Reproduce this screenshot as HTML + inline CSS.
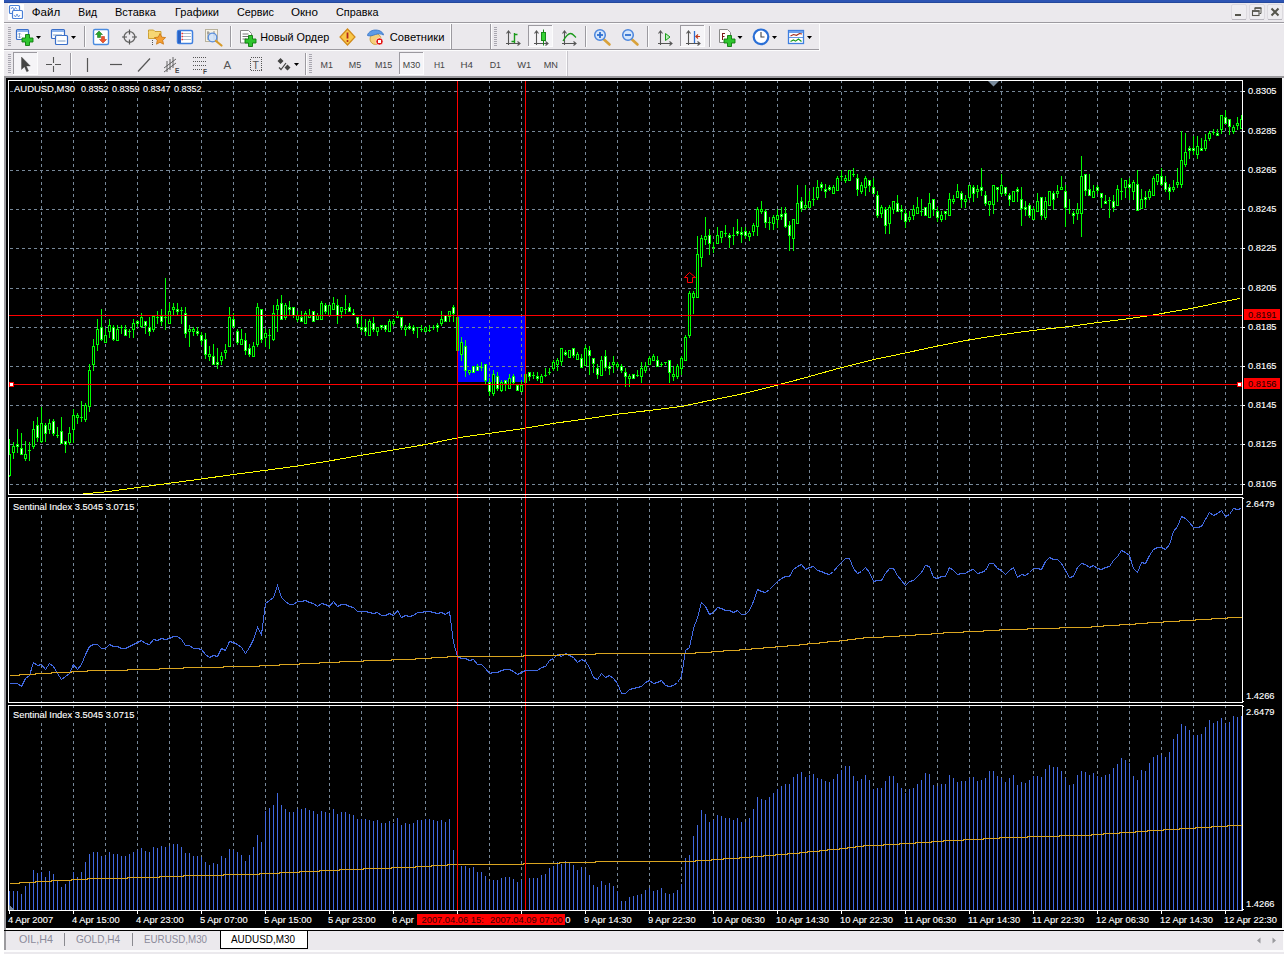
<!DOCTYPE html>
<html><head><meta charset="utf-8"><title>AUDUSD,M30</title>
<style>html,body{margin:0;padding:0;background:#fff;overflow:hidden}svg text{white-space:pre}</style>
</head><body>
<svg width="1288" height="954" viewBox="0 0 1288 954" font-family="'Liberation Sans',sans-serif" style="display:block">
<rect x="0" y="0" width="1288" height="954" fill="#fff"/>
<rect x="4" y="0" width="1280" height="954" fill="#ebe9ed"/>
<rect x="4" y="0" width="1280" height="3" fill="#2d55b4"/>
<rect x="4" y="2" width="1280" height="1" fill="#24489c"/>
<rect x="4" y="22" width="1280" height="1" fill="#9c9aa0"/>
<rect x="4" y="23" width="1280" height="1" fill="#fbfbfc"/>
<g id="chrome">
<g shape-rendering="crispEdges">
<rect x="4" y="49" width="816" height="1" fill="#9c9aa0"/>
<rect x="4" y="50" width="816" height="1" fill="#fcfcfd"/>
<rect x="450" y="24" width="1" height="25" fill="#fcfcfd"/>
<rect x="451" y="24" width="1" height="25" fill="#9c9aa0"/>
<rect x="490" y="24" width="1" height="25" fill="#9c9aa0"/>
<rect x="491" y="24" width="1" height="25" fill="#fcfcfd"/>
<rect x="819" y="24" width="1" height="26" fill="#fcfcfd"/>
<rect x="566" y="51" width="1" height="25" fill="#fcfcfd"/>
<rect x="567" y="51" width="1" height="25" fill="#c8c6cc"/>
<path d="M8 27h3v1h-3zM8 29h3v1h-3zM8 31h3v1h-3zM8 33h3v1h-3zM8 35h3v1h-3zM8 37h3v1h-3zM8 39h3v1h-3zM8 41h3v1h-3zM8 43h3v1h-3zM8 45h3v1h-3z" fill="#a9a7b0"/>
<path d="M494 27h3v1h-3zM494 29h3v1h-3zM494 31h3v1h-3zM494 33h3v1h-3zM494 35h3v1h-3zM494 37h3v1h-3zM494 39h3v1h-3zM494 41h3v1h-3zM494 43h3v1h-3zM494 45h3v1h-3z" fill="#a9a7b0"/>
<path d="M8 54h3v1h-3zM8 56h3v1h-3zM8 58h3v1h-3zM8 60h3v1h-3zM8 62h3v1h-3zM8 64h3v1h-3zM8 66h3v1h-3zM8 68h3v1h-3zM8 70h3v1h-3zM8 72h3v1h-3z" fill="#a9a7b0"/>
<path d="M309 54h3v1h-3zM309 56h3v1h-3zM309 58h3v1h-3zM309 60h3v1h-3zM309 62h3v1h-3zM309 64h3v1h-3zM309 66h3v1h-3zM309 68h3v1h-3zM309 70h3v1h-3zM309 72h3v1h-3z" fill="#a9a7b0"/>
<rect x="84" y="26" width="1" height="21" fill="#9c9aa0"/><rect x="85" y="26" width="1" height="21" fill="#fcfcfd"/>
<rect x="230" y="26" width="1" height="21" fill="#9c9aa0"/><rect x="231" y="26" width="1" height="21" fill="#fcfcfd"/>
<rect x="585" y="26" width="1" height="21" fill="#9c9aa0"/><rect x="586" y="26" width="1" height="21" fill="#fcfcfd"/>
<rect x="647" y="26" width="1" height="21" fill="#9c9aa0"/><rect x="648" y="26" width="1" height="21" fill="#fcfcfd"/>
<rect x="709" y="26" width="1" height="21" fill="#9c9aa0"/><rect x="710" y="26" width="1" height="21" fill="#fcfcfd"/>
<rect x="70" y="53" width="1" height="22" fill="#9c9aa0"/><rect x="71" y="53" width="1" height="22" fill="#fcfcfd"/>
<rect x="305" y="53" width="1" height="22" fill="#9c9aa0"/><rect x="306" y="53" width="1" height="22" fill="#fcfcfd"/>
<rect x="528" y="25" width="25" height="22" fill="#f5f4f7"/><rect x="528" y="25" width="25" height="1" fill="#9c9aa0"/><rect x="528" y="25" width="1" height="22" fill="#9c9aa0"/><rect x="528" y="46" width="25" height="1" fill="#fcfcfd"/><rect x="552" y="25" width="1" height="22" fill="#fcfcfd"/>
<rect x="680" y="25" width="25" height="22" fill="#f5f4f7"/><rect x="680" y="25" width="25" height="1" fill="#9c9aa0"/><rect x="680" y="25" width="1" height="22" fill="#9c9aa0"/><rect x="680" y="46" width="25" height="1" fill="#fcfcfd"/><rect x="704" y="25" width="1" height="22" fill="#fcfcfd"/>
<rect x="13" y="52" width="25" height="23" fill="#f5f4f7"/><rect x="13" y="52" width="25" height="1" fill="#9c9aa0"/><rect x="13" y="52" width="1" height="23" fill="#9c9aa0"/><rect x="13" y="74" width="25" height="1" fill="#fcfcfd"/><rect x="37" y="52" width="1" height="23" fill="#fcfcfd"/>
<rect x="399" y="52" width="25" height="23" fill="#f5f4f7"/><rect x="399" y="52" width="25" height="1" fill="#9c9aa0"/><rect x="399" y="52" width="1" height="23" fill="#9c9aa0"/><rect x="399" y="74" width="25" height="1" fill="#fcfcfd"/><rect x="423" y="52" width="1" height="23" fill="#fcfcfd"/>
<path d="M36 36h5l-2.5 3z" fill="#000" shape-rendering="auto"/>
<path d="M71 36h5l-2.5 3z" fill="#000" shape-rendering="auto"/>
<path d="M737.5 36h5l-2.5 3z" fill="#000" shape-rendering="auto"/>
<path d="M772 36h5l-2.5 3z" fill="#000" shape-rendering="auto"/>
<path d="M807 36h5l-2.5 3z" fill="#000" shape-rendering="auto"/>
<path d="M294 63h5l-2.5 3z" fill="#000" shape-rendering="auto"/>
</g>
<g font-size="11.5" fill="#000">
<rect x="8" y="4" width="16" height="16" fill="#fff"/>
<g fill="#fff" stroke="#4a7fd6" stroke-width="1.2"><rect x="9.5" y="5.5" width="10" height="8" rx="1"/><rect x="12.5" y="10.5" width="10" height="8" rx="1"/></g>
<path d="M11 9l1.5-2 1.5 3 1.5-2.5 1.5 2M14 15l1.5 2 1.5-3 1.5 3 1.5-2" fill="none" stroke="#4a7fd6" stroke-width="0.8"/>
<text x="31.7" y="16" textLength="28.5" lengthAdjust="spacingAndGlyphs">Файл</text>
<text x="78.3" y="16" textLength="18.6" lengthAdjust="spacingAndGlyphs">Вид</text>
<text x="114.9" y="16" textLength="41" lengthAdjust="spacingAndGlyphs">Вставка</text>
<text x="175" y="16" textLength="44" lengthAdjust="spacingAndGlyphs">Графики</text>
<text x="237" y="16" textLength="37" lengthAdjust="spacingAndGlyphs">Сервис</text>
<text x="291" y="16" textLength="27" lengthAdjust="spacingAndGlyphs">Окно</text>
<text x="336" y="16" textLength="42.5" lengthAdjust="spacingAndGlyphs">Справка</text>
</g>
<rect x="1231.5" y="4.5" width="15" height="15" rx="1.5" fill="#eeedf0" stroke="#dcdadf"/>
<rect x="1232" y="19" width="14" height="1" fill="#b9b7be"/>
<rect x="1249.5" y="4.5" width="15" height="15" rx="1.5" fill="#eeedf0" stroke="#dcdadf"/>
<rect x="1250" y="19" width="14" height="1" fill="#b9b7be"/>
<rect x="1267.5" y="4.5" width="15" height="15" rx="1.5" fill="#eeedf0" stroke="#dcdadf"/>
<rect x="1268" y="19" width="14" height="1" fill="#b9b7be"/>
<rect x="1235" y="14" width="6" height="2" fill="#55554c"/>
<path d="M1255 10v-2h6v5.500h-1.500" fill="none" stroke="#55554c" stroke-width="1"/>
<rect x="1254.5" y="7.3" width="7" height="1.5" fill="#55554c"/>
<rect x="1252.500" y="11" width="6.500" height="4.500" fill="none" stroke="#55554c" stroke-width="1.100"/>
<rect x="1252" y="10.2" width="7.5" height="1.6" fill="#55554c"/>
<path d="M1271.5 8.5l7 7M1278.5 8.5l-7 7" stroke="#55554c" stroke-width="2" fill="none"/>
<rect x="16.5" y="29.5" width="12" height="10" rx="1" fill="#fff" stroke="#3a6fc9" stroke-width="1.2"/>
<rect x="17" y="30" width="11" height="2" fill="#8db4ee"/>
<path d="M19.5 33v5M18 34.5l1.5-1.5 1.5 1.5M18 36.5l1.5 1.5 1.5-1.5" stroke="#6a8fc0" stroke-width="0.8" fill="none"/>
<path d="M25.5 34.5h4v3.5h3.5v4h-3.5v3.5h-4v-3.5h-3.5v-4h3.5z" fill="#2fc52f" stroke="#0d7a0d" stroke-width="0.9"/>
<rect x="51.5" y="29.5" width="13" height="9" rx="1" fill="#fff" stroke="#3a6fc9" stroke-width="1.2"/>
<rect x="52" y="30" width="12" height="2" fill="#8db4ee"/>
<rect x="55.5" y="35.5" width="12" height="9" rx="1" fill="#fff" stroke="#3a6fc9" stroke-width="1.2"/>
<path d="M53 35h9M57.5 41h8" stroke="#6a8fc0" stroke-width="0.9" fill="none"/>
<rect x="93.5" y="29.5" width="15" height="15" rx="1.5" fill="#fff" stroke="#4a8be0" stroke-width="1.4"/>
<path d="M99 31l-3.5 3.5h2v3h3v-3h2z" fill="#2aa52a" stroke="#116b11" stroke-width="0.5"/>
<path d="M103 43l-3.5-3.5h2v-3h3v3h2z" fill="#f0552a" stroke="#b02a10" stroke-width="0.5"/>
<circle cx="129.5" cy="37" r="5.4" fill="none" stroke="#666" stroke-width="1.3"/>
<path d="M129.5 29.5v5M129.5 39.5v5M122 37h5M132 37h5" stroke="#555" stroke-width="1.2" fill="none"/>
<path d="M148.5 32.5v-2.5h5l1.5 1.5h6v7h-12.5z" fill="#f7d774" stroke="#c79a28" stroke-width="0.9"/>
<path d="M160 33.5l1.7 3.6 3.9.5-2.9 2.7.8 3.9-3.5-1.9-3.5 1.9.8-3.9-2.9-2.7 3.9-.5z" fill="#f5a033" stroke="#c97412" stroke-width="0.8"/>
<path d="M152.5 40v5" stroke="#555" stroke-width="1" stroke-dasharray="1 1"/>
<rect x="177.5" y="30.5" width="15" height="13" rx="1.5" fill="#fff" stroke="#3f7fe0" stroke-width="1.5"/>
<rect x="178" y="31" width="3" height="12" fill="#2a62c4"/>
<path d="M183 33.5h8M183 36.5h8M183 39.5h8" stroke="#9ab" stroke-width="0.8"/>
<path d="M181.5 33.5h1.4M181.5 36.5h1.4M181.5 39.5h1.4" stroke="#e22" stroke-width="1.3"/>
<rect x="205.5" y="29.5" width="12" height="12" fill="#f6f2e6" stroke="#b9b29c" stroke-width="1"/>
<path d="M208 31v9M214 31v9M207 33h3M213 35h3" stroke="#777" stroke-width="0.8"/>
<circle cx="212.5" cy="37.5" r="4.3" fill="#cfe3fb" fill-opacity="0.85" stroke="#5b8fdc" stroke-width="1.3"/>
<path d="M216 41l5.5 4.5" stroke="#d79a2a" stroke-width="2.2" stroke-linecap="round"/>
<path d="M240.5 30.5h8l3 3v9.5h-11z" fill="#fff" stroke="#8a8a8a" stroke-width="1"/>
<path d="M242.5 34h6M242.5 36.5h7M242.5 39h4" stroke="#666" stroke-width="0.9"/>
<path d="M248.5 35.5h4v3.5h3.5v4h-3.5v3.5h-4v-3.5h-3.5v-4h3.5z" fill="#2fc52f" stroke="#0d7a0d" stroke-width="0.9"/>
<text x="260.2" y="41" font-size="11" textLength="69" lengthAdjust="spacingAndGlyphs" fill="#000">Новый Ордер</text>
<path d="M347.5 29l7.5 8-7.5 8-7.5-8z" fill="#f9c84a" stroke="#d18a1a" stroke-width="1.2"/>
<path d="M347.5 32.5v6" stroke="#b3261a" stroke-width="1.8"/><circle cx="347.5" cy="41" r="1" fill="#b3261a"/>
<ellipse cx="375.5" cy="39" rx="5.5" ry="5.5" fill="#f6cf7a" stroke="#c9962c" stroke-width="0.8"/>
<path d="M367.5 35.5c0-2 3-5.5 8-5.5s8 3 8 5c-3-1.5-5-1.5-8-.5s-5.500 2-8 1z" fill="#5f9be6" stroke="#2f6fc4" stroke-width="0.8"/>
<circle cx="379.5" cy="41.5" r="3.6" fill="#e01616" stroke="#fff" stroke-width="0.6"/>
<rect x="378" y="40" width="3" height="3" fill="#fff"/>
<text x="389.8" y="41" font-size="11" textLength="54.6" lengthAdjust="spacingAndGlyphs" fill="#000">Советники</text>
<path d="M508.5 31v14M506 43.5h14M506.5 33.5l2-2.5 2 2.5M517.5 41.5l2.500 2-2.500 2" stroke="#555" stroke-width="1.1" fill="none"/>
<path d="M514.5 33v10M514.5 34.500h3M511.500 41.500h3" stroke="#1a9a1a" stroke-width="1.4" fill="none"/>
<path d="M536.5 31v14M534 43.5h14M534.5 33.5l2-2.5 2 2.5M545.5 41.5l2.500 2-2.500 2" stroke="#555" stroke-width="1.1" fill="none"/>
<path d="M543.5 29.5v16" stroke="#1a8a1a" stroke-width="1"/>
<rect x="541.5" y="32.5" width="4" height="8" fill="#35d335" stroke="#1a8a1a" stroke-width="1"/>
<path d="M564.5 31v14M562 43.5h14M562.5 33.5l2-2.5 2 2.5M573.5 41.5l2.500 2-2.500 2" stroke="#555" stroke-width="1.1" fill="none"/>
<path d="M563 41c3-5 5-7.500 7.500-7.500s3.500 2.500 5.500 4" stroke="#1a9a1a" stroke-width="1.3" fill="none"/>
<path d="M604 39.5l5.500 5" stroke="#d8a13a" stroke-width="2.600" stroke-linecap="round"/><circle cx="600" cy="35" r="5.300" fill="#d5e6fb" stroke="#4c86dd" stroke-width="1.500"/><path d="M597 35h6" stroke="#2f6fd0" stroke-width="1.800"/><path d="M600 32v6" stroke="#2f6fd0" stroke-width="1.800"/>
<path d="M632 39.5l5.500 5" stroke="#d8a13a" stroke-width="2.600" stroke-linecap="round"/><circle cx="628" cy="35" r="5.300" fill="#d5e6fb" stroke="#4c86dd" stroke-width="1.500"/><path d="M625 35h6" stroke="#2f6fd0" stroke-width="1.800"/>
<path d="M660.5 31v14M658 43.5h14M658.5 33.5l2-2.5 2 2.5M669.5 41.5l2.500 2-2.500 2" stroke="#555" stroke-width="1.1" fill="none"/>
<path d="M665.500 33.500l4.500 3.500-4.500 3.500z" fill="#baf0ba" stroke="#1a9a1a" stroke-width="1"/>
<path d="M688.5 31v14M686 43.5h14M686.5 33.5l2-2.5 2 2.5M697.5 41.5l2.500 2-2.500 2" stroke="#555" stroke-width="1.1" fill="none"/>
<path d="M694.500 31v12" stroke="#2f6fd0" stroke-width="1.300"/><path d="M700 36.500h-4M698 34.500l-2.200 2 2.200 2" stroke="#c0391a" stroke-width="1.100" fill="none"/>
<path d="M719.500 29.500h8l3 3v10h-11z" fill="#fff" stroke="#8a8a8a" stroke-width="1"/>
<path d="M722.500 33v7M722.500 33.500h2.500M722.500 36.500h2" stroke="#7a1a1a" stroke-width="1"/>
<path d="M727.5 35.5h4v3.5h3.5v4h-3.5v3.5h-4v-3.5h-3.5v-4h3.5z" fill="#2fc52f" stroke="#0d7a0d" stroke-width="0.9"/>
<circle cx="761" cy="36.800" r="7.300" fill="#fff" stroke="#2a6fd6" stroke-width="2.200"/>
<path d="M761 32v5h3.500" stroke="#444" stroke-width="1.100" fill="none"/>
<rect x="788.500" y="30.500" width="15" height="13" fill="#fff" stroke="#3f7fe0" stroke-width="1.300"/>
<rect x="789" y="31" width="14" height="2" fill="#6da0ea"/>
<path d="M789 37.500h14" stroke="#3f7fe0" stroke-width="0.800"/>
<path d="M790.500 36l3-1.500 3 .8 3-1.800 2.500.5" stroke="#a02a1a" stroke-width="1.100" fill="none"/>
<path d="M790.500 41.500l3-1.500 2 1.200 3-2.200 3 2.500" stroke="#1a9a1a" stroke-width="1.100" fill="none"/>
<path d="M21.500 57v12.500l3-2.800 2.200 5 1.800-.8-2.200-4.900h4z" fill="#444" stroke="#444" stroke-width="0.400"/>
<path d="M53.500 57v6M53.500 66v6M46 64.500h6M55 64.500h6" stroke="#555" stroke-width="1.100"/>
<path d="M87.500 58v14" stroke="#555" stroke-width="1.200"/>
<path d="M110 64.500h12" stroke="#555" stroke-width="1.200"/>
<path d="M138 71.500l12-13" stroke="#555" stroke-width="1.200"/>
<path d="M164 68l12-9M164 72l12-9M167 61v11M170 59v11M173 57v11" stroke="#555" stroke-width="0.900" fill="none"/>
<text x="175" y="73" font-size="6.500" font-weight="bold" fill="#444">E</text>
<path d="M193 57.500h14M193 61.500h14M193 65.500h14M193 69.500h9" stroke="#555" stroke-width="1" stroke-dasharray="1 1" shape-rendering="crispEdges"/>
<text x="203" y="73.500" font-size="6.500" font-weight="bold" fill="#444">F</text>
<text x="223.500" y="69" font-size="11.500" fill="#555">A</text>
<rect x="250.500" y="57.500" width="11" height="13" fill="none" stroke="#555" stroke-width="1" stroke-dasharray="1 1" shape-rendering="crispEdges"/>
<text x="252.500" y="68.500" font-size="10.500" fill="#555">T</text>
<path d="M280.500 58l3 3-3 3-3-3z M287.500 64.500l3 3-3 3-3-3z" fill="#444"/><path d="M279 67.500l2 2 5-6.500" stroke="#444" stroke-width="1.200" fill="none"/>
<text x="320.6" y="68" font-size="9.330" fill="#444" textLength="12.4" lengthAdjust="spacingAndGlyphs">M1</text>
<text x="348.8" y="68" font-size="9.330" fill="#444" textLength="12.4" lengthAdjust="spacingAndGlyphs">M5</text>
<text x="374.9" y="68" font-size="9.330" fill="#444" textLength="17.4" lengthAdjust="spacingAndGlyphs">M15</text>
<text x="402.8" y="68" font-size="9.330" fill="#444" textLength="17.4" lengthAdjust="spacingAndGlyphs">M30</text>
<text x="433.9" y="68" font-size="9.330" fill="#444" textLength="10.9" lengthAdjust="spacingAndGlyphs">H1</text>
<text x="460.5" y="68" font-size="9.330" fill="#444" textLength="12.5" lengthAdjust="spacingAndGlyphs">H4</text>
<text x="489.7" y="68" font-size="9.330" fill="#444" textLength="11.3" lengthAdjust="spacingAndGlyphs">D1</text>
<text x="517.3" y="68" font-size="9.330" fill="#444" textLength="14" lengthAdjust="spacingAndGlyphs">W1</text>
<text x="543.7" y="68" font-size="9.330" fill="#444" textLength="14.3" lengthAdjust="spacingAndGlyphs">MN</text>
</g>
<g shape-rendering="crispEdges">
<rect x="4" y="76" width="1280" height="2" fill="#9b9a9e"/>
<rect x="4" y="76" width="2" height="874" fill="#9b9a9e"/>
<rect x="1282" y="78" width="2" height="852" fill="#f8f8fa"/>
<rect x="6" y="78" width="1276" height="850" fill="#000"/>
<rect x="6" y="928" width="1278" height="2" fill="#fdfdfd"/>
<rect x="4" y="930" width="1280" height="1" fill="#000"/>
<rect x="4" y="950" width="1280" height="2" fill="#fcfcfd"/>
<rect x="458" y="316" width="67" height="66" fill="#0000ff"/>
<path d="M41.5 80V494M73.5 80V494M105.5 80V494M137.5 80V494M169.5 80V494M201.5 80V494M233.5 80V494M265.5 80V494M297.5 80V494M329.5 80V494M361.5 80V494M393.5 80V494M425.5 80V494M457.5 80V494M489.5 80V494M521.5 80V494M553.5 80V494M585.5 80V494M617.5 80V494M649.5 80V494M681.5 80V494M713.5 80V494M745.5 80V494M777.5 80V494M809.5 80V494M841.5 80V494M873.5 80V494M905.5 80V494M937.5 80V494M969.5 80V494M1001.5 80V494M1033.5 80V494M1065.5 80V494M1097.5 80V494M1129.5 80V494M1161.5 80V494M1193.5 80V494M1225.5 80V494M41.5 497V702M73.5 497V702M105.5 497V702M137.5 497V702M169.5 497V702M201.5 497V702M233.5 497V702M265.5 497V702M297.5 497V702M329.5 497V702M361.5 497V702M393.5 497V702M425.5 497V702M457.5 497V702M489.5 497V702M521.5 497V702M553.5 497V702M585.5 497V702M617.5 497V702M649.5 497V702M681.5 497V702M713.5 497V702M745.5 497V702M777.5 497V702M809.5 497V702M841.5 497V702M873.5 497V702M905.5 497V702M937.5 497V702M969.5 497V702M1001.5 497V702M1033.5 497V702M1065.5 497V702M1097.5 497V702M1129.5 497V702M1161.5 497V702M1193.5 497V702M1225.5 497V702M41.5 705V910M73.5 705V910M105.5 705V910M137.5 705V910M169.5 705V910M201.5 705V910M233.5 705V910M265.5 705V910M297.5 705V910M329.5 705V910M361.5 705V910M393.5 705V910M425.5 705V910M457.5 705V910M489.5 705V910M521.5 705V910M553.5 705V910M585.5 705V910M617.5 705V910M649.5 705V910M681.5 705V910M713.5 705V910M745.5 705V910M777.5 705V910M809.5 705V910M841.5 705V910M873.5 705V910M905.5 705V910M937.5 705V910M969.5 705V910M1001.5 705V910M1033.5 705V910M1065.5 705V910M1097.5 705V910M1129.5 705V910M1161.5 705V910M1193.5 705V910M1225.5 705V910" stroke="#778899" stroke-width="1" stroke-dasharray="3 3" fill="none"/>
<path d="M10 91.5H1242M10 131.5H1242M10 170.5H1242M10 209.5H1242M10 248.5H1242M10 288.5H1242M10 327.5H1242M10 366.5H1242M10 405.5H1242M10 444.5H1242M10 484.5H1242" stroke="#778899" stroke-width="1" stroke-dasharray="3 3" fill="none"/>
<polyline points="83.2,493.9 105.5,491.9 137.8,487.5 169.6,483.2 201.2,479.0 233.5,474.5 265.8,470.3 297.6,466.0 329.6,460.9 361.4,455.2 392.0,450.2 425.5,444.5 457.8,437.8 489.6,433.3 521.2,428.8 553.5,423.4 585.8,418.9 617.6,414.2 649.6,410.4 681.4,406.5 712.0,400.0 745.5,393.2 777.8,385.0 809.6,376.5 841.2,367.6 873.5,359.6 905.8,352.9 937.6,346.0 969.6,339.8 1001.4,334.8 1033.0,330.4 1065.5,327.0 1097.7,322.5 1129.7,318.5 1148.7,315.8 1161.7,313.5 1193.4,308.0 1225.8,301.2 1240.4,298.3" fill="none" stroke="#ffff00" stroke-width="1"/>
<path d="M9 439h1v38h-1zM8 454h3v22h-3zM13 442h1v17h-1zM12 446h3v7h-3zM17 429h1v24h-1zM16 444h3v3h-3zM21 433h1v22h-1zM20 448h3v7h-3zM25 441h1v20h-1zM24 454h3v5h-3zM29 442h1v19h-1zM28 450h3v1h-3zM33 421h1v28h-1zM32 429h3v18h-3zM37 417h1v25h-1zM36 425h3v13h-3zM41 407h1v36h-1zM40 423h3v19h-3zM45 423h1v19h-1zM44 425h3v9h-3zM49 419h1v15h-1zM48 423h3v7h-3zM53 419h1v17h-1zM52 421h3v13h-3zM57 427h1v11h-1zM56 435h3v1h-3zM61 417h1v27h-1zM60 431h3v13h-3zM65 441h1v12h-1zM64 441h3v4h-3zM69 427h1v18h-1zM68 433h3v10h-3zM73 409h1v34h-1zM72 415h3v15h-3zM77 413h1v11h-1zM76 415h3v3h-3zM81 401h1v21h-1zM80 417h3v1h-3zM85 403h1v19h-1zM84 405h3v15h-3zM89 364h1v48h-1zM88 370h3v37h-3zM93 339h1v32h-1zM92 346h3v19h-3zM97 319h1v32h-1zM96 329h3v16h-3zM101 309h1v32h-1zM100 327h3v13h-3zM105 329h1v14h-1zM104 335h3v8h-3zM109 319h1v19h-1zM108 325h3v7h-3zM113 325h1v16h-1zM112 327h3v13h-3zM117 325h1v16h-1zM116 329h3v12h-3zM121 325h1v9h-1zM120 327h3v1h-3zM125 325h1v11h-1zM124 329h3v7h-3zM129 329h1v9h-1zM128 331h3v1h-3zM133 319h1v19h-1zM132 323h3v7h-3zM137 320h1v7h-1zM136 321h3v3h-3zM141 313h1v15h-1zM140 317h3v10h-3zM145 321h1v13h-1zM144 321h3v5h-3zM149 317h1v19h-1zM148 327h3v5h-3zM153 316h1v16h-1zM152 316h3v14h-3zM157 311h1v13h-1zM156 317h3v1h-3zM161 309h1v17h-1zM160 316h3v6h-3zM165 278h1v52h-1zM164 317h3v1h-3zM169 303h1v21h-1zM168 311h3v13h-3zM173 303h1v12h-1zM172 307h3v3h-3zM177 303h1v12h-1zM176 309h3v3h-3zM181 307h1v17h-1zM180 310h3v1h-3zM185 307h1v31h-1zM184 313h3v21h-3zM189 325h1v22h-1zM188 329h3v3h-3zM193 327h1v9h-1zM192 329h3v3h-3zM197 327h1v9h-1zM196 331h3v3h-3zM201 332h1v13h-1zM200 335h3v6h-3zM205 333h1v26h-1zM204 339h3v16h-3zM209 346h1v15h-1zM208 354h3v3h-3zM213 344h1v21h-1zM212 356h3v9h-3zM217 348h1v21h-1zM216 362h3v3h-3zM221 352h1v13h-1zM220 356h3v5h-3zM225 344h1v15h-1zM224 350h3v3h-3zM229 307h1v40h-1zM228 317h3v30h-3zM233 313h1v15h-1zM232 319h3v8h-3zM237 329h1v16h-1zM236 331h3v12h-3zM241 329h1v16h-1zM240 339h3v6h-3zM245 333h1v22h-1zM244 340h3v11h-3zM249 344h1v13h-1zM248 348h3v7h-3zM253 342h1v15h-1zM252 346h3v11h-3zM257 303h1v44h-1zM256 307h3v38h-3zM261 309h1v34h-1zM260 309h3v31h-3zM265 329h1v18h-1zM264 333h3v5h-3zM269 329h1v20h-1zM268 335h3v1h-3zM273 305h1v36h-1zM272 313h3v27h-3zM277 299h1v33h-1zM276 305h3v5h-3zM281 295h1v25h-1zM280 303h3v17h-3zM285 303h1v17h-1zM284 305h3v13h-3zM289 301h1v14h-1zM288 307h3v3h-3zM293 307h1v11h-1zM292 307h3v9h-3zM297 311h1v11h-1zM296 315h3v5h-3zM301 311h1v11h-1zM300 317h3v5h-3zM305 311h1v13h-1zM304 313h3v11h-3zM309 309h1v9h-1zM308 315h3v3h-3zM313 311h1v11h-1zM312 311h3v11h-3zM317 313h1v7h-1zM316 315h3v5h-3zM321 301h1v19h-1zM320 303h3v17h-3zM325 303h1v11h-1zM324 305h3v7h-3zM329 305h1v11h-1zM328 305h3v11h-3zM333 297h1v13h-1zM332 303h3v7h-3zM337 299h1v25h-1zM336 305h3v11h-3zM341 307h1v11h-1zM340 307h3v5h-3zM345 295h1v19h-1zM344 309h3v1h-3zM349 303h1v9h-1zM348 307h3v5h-3zM353 309h1v6h-1zM352 313h3v3h-3zM357 317h1v11h-1zM356 317h3v7h-3zM361 315h1v17h-1zM360 327h3v3h-3zM365 319h1v17h-1zM364 327h3v5h-3zM369 319h1v17h-1zM368 321h3v15h-3zM373 317h1v15h-1zM372 323h3v7h-3zM377 327h1v9h-1zM376 327h3v5h-3zM381 325h1v5h-1zM380 325h3v3h-3zM385 325h1v7h-1zM384 325h3v5h-3zM389 319h1v13h-1zM388 321h3v11h-3zM393 319h1v7h-1zM392 321h3v3h-3zM397 311h1v6h-1zM396 315h3v3h-3zM401 317h1v13h-1zM400 317h3v10h-3zM405 325h1v11h-1zM404 327h3v3h-3zM409 323h1v7h-1zM408 326h3v3h-3zM413 325h1v9h-1zM412 327h3v4h-3zM417 327h1v11h-1zM416 327h3v1h-3zM421 325h1v7h-1zM420 329h3v1h-3zM425 327h1v5h-1zM424 327h3v5h-3zM429 325h1v7h-1zM428 330h3v1h-3zM433 325h1v5h-1zM432 327h3v1h-3zM437 323h1v9h-1zM436 325h3v3h-3zM441 311h1v15h-1zM440 319h3v5h-3zM445 315h1v7h-1zM444 315h3v7h-3zM449 311h1v11h-1zM448 311h3v6h-3zM453 305h1v17h-1zM452 307h3v7h-3zM457 315h1v36h-1zM456 317h3v34h-3zM461 337h1v24h-1zM460 342h3v13h-3zM465 340h1v37h-1zM464 346h3v25h-3zM469 370h1v5h-1zM468 370h3v3h-3zM473 366h1v7h-1zM472 366h3v7h-3zM477 364h1v7h-1zM476 366h3v5h-3zM481 362h1v9h-1zM480 367h3v1h-3zM485 364h1v20h-1zM484 364h3v17h-3zM489 378h1v18h-1zM488 382h3v10h-3zM493 370h1v26h-1zM492 374h3v20h-3zM497 372h1v19h-1zM496 376h3v13h-3zM501 380h1v12h-1zM500 382h3v9h-3zM505 380h1v11h-1zM504 380h3v4h-3zM509 374h1v15h-1zM508 378h3v11h-3zM513 374h1v10h-1zM512 376h3v7h-3zM517 385h1v6h-1zM516 385h3v6h-3zM521 380h1v12h-1zM520 385h3v7h-3zM525 374h1v9h-1zM524 374h3v9h-3zM529 372h1v9h-1zM528 372h3v5h-3zM533 372h1v7h-1zM532 375h3v1h-3zM537 372h1v9h-1zM536 376h3v3h-3zM541 374h1v9h-1zM540 376h3v7h-3zM545 368h1v9h-1zM544 375h3v1h-3zM549 368h1v7h-1zM548 372h3v1h-3zM553 360h1v11h-1zM552 362h3v7h-3zM557 358h1v13h-1zM556 360h3v5h-3zM561 348h1v18h-1zM560 348h3v14h-3zM565 350h1v6h-1zM564 352h3v3h-3zM569 350h1v8h-1zM568 350h3v8h-3zM573 348h1v10h-1zM572 348h3v8h-3zM577 352h1v8h-1zM576 354h3v6h-3zM581 354h1v14h-1zM580 358h3v10h-3zM585 345h1v21h-1zM584 348h3v18h-3zM589 346h1v29h-1zM588 350h3v6h-3zM593 358h1v15h-1zM592 358h3v6h-3zM597 364h1v15h-1zM596 368h3v7h-3zM601 356h1v20h-1zM600 360h3v16h-3zM605 350h1v21h-1zM604 356h3v12h-3zM609 362h1v13h-1zM608 366h3v3h-3zM613 356h1v17h-1zM612 362h3v3h-3zM617 362h1v7h-1zM616 364h3v3h-3zM621 364h1v9h-1zM620 366h3v5h-3zM625 368h1v19h-1zM624 372h3v5h-3zM629 374h1v13h-1zM628 376h3v3h-3zM633 374h1v5h-1zM632 374h3v5h-3zM637 370h1v7h-1zM636 375h3v1h-3zM641 362h1v21h-1zM640 368h3v9h-3zM645 362h1v11h-1zM644 366h3v5h-3zM649 356h1v9h-1zM648 358h3v7h-3zM653 354h1v7h-1zM652 356h3v5h-3zM657 356h1v11h-1zM656 360h3v7h-3zM661 362h1v5h-1zM660 364h3v1h-3zM665 362h1v3h-1zM664 362h3v1h-3zM669 360h1v23h-1zM668 360h3v13h-3zM673 366h1v15h-1zM672 374h3v3h-3zM677 364h1v15h-1zM676 366h3v11h-3zM681 356h1v19h-1zM680 358h3v11h-3zM685 335h1v26h-1zM684 337h3v24h-3zM689 291h1v47h-1zM688 293h3v43h-3zM693 291h1v23h-1zM692 293h3v5h-3zM697 236h1v62h-1zM696 254h3v44h-3zM701 235h1v32h-1zM700 238h3v20h-3zM705 217h1v28h-1zM704 236h3v4h-3zM709 229h1v26h-1zM708 235h3v9h-3zM713 242h1v11h-1zM712 247h3v1h-3zM717 227h1v17h-1zM716 235h3v9h-3zM721 231h1v12h-1zM720 231h3v7h-3zM725 225h1v12h-1zM724 233h3v1h-3zM729 233h1v15h-1zM728 235h3v3h-3zM733 227h1v18h-1zM732 235h3v1h-3zM737 219h1v17h-1zM736 231h3v3h-3zM741 227h1v16h-1zM740 232h3v3h-3zM745 227h1v12h-1zM744 231h3v5h-3zM749 231h1v10h-1zM748 233h3v4h-3zM753 223h1v13h-1zM752 225h3v7h-3zM757 207h1v29h-1zM756 209h3v18h-3zM761 201h1v13h-1zM760 209h3v3h-3zM765 209h1v19h-1zM764 211h3v12h-3zM769 217h1v13h-1zM768 222h3v1h-3zM773 215h1v15h-1zM772 217h3v7h-3zM777 209h1v19h-1zM776 215h3v5h-3zM781 207h1v13h-1zM780 214h3v3h-3zM785 207h1v21h-1zM784 213h3v14h-3zM789 221h1v30h-1zM788 225h3v11h-3zM793 219h1v32h-1zM792 219h3v20h-3zM797 185h1v39h-1zM796 203h3v21h-3zM801 197h1v15h-1zM800 201h3v8h-3zM805 185h1v25h-1zM804 205h3v3h-3zM809 191h1v17h-1zM808 201h3v7h-3zM813 187h1v19h-1zM812 199h3v1h-3zM817 180h1v20h-1zM816 187h3v11h-3zM821 182h1v9h-1zM820 184h3v4h-3zM825 184h1v14h-1zM824 189h3v3h-3zM829 185h1v6h-1zM828 187h3v3h-3zM833 185h1v9h-1zM832 187h3v7h-3zM837 176h1v15h-1zM836 178h3v13h-3zM841 170h1v11h-1zM840 176h3v1h-3zM845 175h1v8h-1zM844 178h3v3h-3zM849 170h1v11h-1zM848 170h3v11h-3zM853 168h1v9h-1zM852 174h3v1h-3zM857 174h1v22h-1zM856 178h3v12h-3zM861 182h1v12h-1zM860 185h3v7h-3zM865 176h1v20h-1zM864 178h3v10h-3zM869 180h1v12h-1zM868 180h3v6h-3zM873 178h1v16h-1zM872 187h3v7h-3zM877 191h1v27h-1zM876 195h3v21h-3zM881 205h1v13h-1zM880 207h3v7h-3zM885 207h1v27h-1zM884 209h3v17h-3zM889 205h1v29h-1zM888 207h3v17h-3zM893 201h1v13h-1zM892 201h3v9h-3zM897 195h1v17h-1zM896 203h3v9h-3zM901 205h1v15h-1zM900 209h3v3h-3zM905 209h1v19h-1zM904 213h3v9h-3zM909 211h1v11h-1zM908 217h3v3h-3zM913 205h1v15h-1zM912 209h3v7h-3zM917 197h1v17h-1zM916 207h3v7h-3zM921 199h1v17h-1zM920 211h3v1h-3zM925 207h1v9h-1zM924 207h3v9h-3zM929 193h1v25h-1zM928 203h3v15h-3zM933 199h1v17h-1zM932 199h3v11h-3zM937 207h1v15h-1zM936 211h3v7h-3zM941 211h1v11h-1zM940 215h3v5h-3zM945 211h1v9h-1zM944 211h3v3h-3zM949 193h1v23h-1zM948 199h3v17h-3zM953 195h1v9h-1zM952 199h3v3h-3zM957 184h1v14h-1zM956 191h3v7h-3zM961 191h1v17h-1zM960 193h3v7h-3zM965 195h1v13h-1zM964 199h3v3h-3zM969 185h1v15h-1zM968 185h3v13h-3zM973 185h1v17h-1zM972 187h3v7h-3zM977 185h1v13h-1zM976 189h3v3h-3zM981 168h1v28h-1zM980 187h3v4h-3zM985 191h1v15h-1zM984 195h3v9h-3zM989 201h1v15h-1zM988 201h3v4h-3zM993 185h1v29h-1zM992 185h3v20h-3zM997 187h1v15h-1zM996 187h3v3h-3zM1001 174h1v22h-1zM1000 185h3v9h-3zM1005 187h1v9h-1zM1004 187h3v7h-3zM1009 193h1v13h-1zM1008 195h3v5h-3zM1013 191h1v11h-1zM1012 191h3v11h-3zM1017 187h1v15h-1zM1016 189h3v3h-3zM1021 187h1v39h-1zM1020 199h3v10h-3zM1025 201h1v15h-1zM1024 207h3v3h-3zM1029 203h1v15h-1zM1028 205h3v11h-3zM1033 207h1v13h-1zM1032 209h3v11h-3zM1037 193h1v19h-1zM1036 201h3v11h-3zM1041 197h1v23h-1zM1040 197h3v19h-3zM1045 197h1v23h-1zM1044 201h3v17h-3zM1049 191h1v15h-1zM1048 191h3v15h-3zM1053 191h1v19h-1zM1052 193h3v7h-3zM1057 185h1v13h-1zM1056 191h3v3h-3zM1061 176h1v14h-1zM1060 187h3v3h-3zM1065 185h1v42h-1zM1064 191h3v17h-3zM1069 199h1v15h-1zM1068 209h3v1h-3zM1073 211h1v13h-1zM1072 213h3v3h-3zM1077 203h1v17h-1zM1076 209h3v5h-3zM1081 156h1v81h-1zM1080 176h3v38h-3zM1085 174h1v22h-1zM1084 174h3v17h-3zM1089 174h1v22h-1zM1088 189h3v7h-3zM1093 185h1v13h-1zM1092 191h3v7h-3zM1097 185h1v9h-1zM1096 187h3v4h-3zM1101 193h1v15h-1zM1100 193h3v5h-3zM1105 195h1v9h-1zM1104 201h3v3h-3zM1109 197h1v21h-1zM1108 200h3v1h-3zM1113 195h1v17h-1zM1112 201h3v7h-3zM1117 185h1v21h-1zM1116 189h3v17h-3zM1121 178h1v22h-1zM1120 191h3v1h-3zM1125 180h1v18h-1zM1124 180h3v8h-3zM1129 178h1v22h-1zM1128 184h3v4h-3zM1133 180h1v20h-1zM1132 182h3v10h-3zM1137 170h1v41h-1zM1136 184h3v27h-3zM1141 189h1v20h-1zM1140 199h3v10h-3zM1145 191h1v17h-1zM1144 197h3v3h-3zM1149 189h1v11h-1zM1148 191h3v7h-3zM1153 176h1v20h-1zM1152 178h3v18h-3zM1157 174h1v11h-1zM1156 174h3v8h-3zM1161 168h1v18h-1zM1160 176h3v9h-3zM1165 176h1v16h-1zM1164 182h3v8h-3zM1169 184h1v16h-1zM1168 187h3v5h-3zM1173 180h1v12h-1zM1172 187h3v3h-3zM1177 168h1v20h-1zM1176 182h3v3h-3zM1181 131h1v57h-1zM1180 160h3v25h-3zM1185 133h1v34h-1zM1184 152h3v13h-3zM1189 146h1v13h-1zM1188 148h3v3h-3zM1193 136h1v19h-1zM1192 148h3v3h-3zM1197 136h1v23h-1zM1196 146h3v9h-3zM1201 138h1v13h-1zM1200 148h3v3h-3zM1205 134h1v17h-1zM1204 140h3v9h-3zM1209 131h1v10h-1zM1208 133h3v6h-3zM1213 129h1v6h-1zM1212 132h3v1h-3zM1217 129h1v6h-1zM1216 133h3v3h-3zM1221 115h1v19h-1zM1220 115h3v15h-3zM1225 110h1v14h-1zM1224 117h3v7h-3zM1229 119h1v16h-1zM1228 119h3v8h-3zM1233 125h1v9h-1zM1232 127h3v5h-3zM1237 117h1v13h-1zM1236 123h3v3h-3zM1241 115h1v14h-1zM1240 119h3v10h-3z" fill="#00ff00"/>
<path d="M9 455h1v20h-1zM13 447h1v5h-1zM25 455h1v3h-1zM33 430h1v16h-1zM41 424h1v17h-1zM49 424h1v5h-1zM69 434h1v8h-1zM73 416h1v13h-1zM77 416h1v1h-1zM85 406h1v13h-1zM89 371h1v35h-1zM93 347h1v17h-1zM97 330h1v14h-1zM105 336h1v6h-1zM109 326h1v5h-1zM117 330h1v10h-1zM133 324h1v5h-1zM141 318h1v8h-1zM153 317h1v12h-1zM169 312h1v11h-1zM173 308h1v1h-1zM189 330h1v1h-1zM193 330h1v1h-1zM209 355h1v1h-1zM221 357h1v3h-1zM225 351h1v1h-1zM229 318h1v28h-1zM241 340h1v4h-1zM253 347h1v9h-1zM257 308h1v36h-1zM265 334h1v3h-1zM273 314h1v25h-1zM277 306h1v3h-1zM285 306h1v11h-1zM297 316h1v3h-1zM305 314h1v9h-1zM309 316h1v1h-1zM317 316h1v3h-1zM321 304h1v15h-1zM329 306h1v9h-1zM333 304h1v5h-1zM341 308h1v3h-1zM369 322h1v13h-1zM377 328h1v3h-1zM389 322h1v9h-1zM393 322h1v1h-1zM397 316h1v1h-1zM405 328h1v1h-1zM425 328h1v3h-1zM441 320h1v3h-1zM449 312h1v4h-1zM461 343h1v11h-1zM469 371h1v1h-1zM493 375h1v18h-1zM501 383h1v7h-1zM509 379h1v9h-1zM521 386h1v5h-1zM525 375h1v7h-1zM541 377h1v5h-1zM553 363h1v5h-1zM557 361h1v3h-1zM561 349h1v12h-1zM569 351h1v6h-1zM577 355h1v4h-1zM585 349h1v16h-1zM601 361h1v14h-1zM613 363h1v1h-1zM617 365h1v1h-1zM629 377h1v1h-1zM641 369h1v7h-1zM645 367h1v3h-1zM649 359h1v5h-1zM653 357h1v3h-1zM673 375h1v1h-1zM677 367h1v9h-1zM681 359h1v9h-1zM685 338h1v22h-1zM689 294h1v41h-1zM693 294h1v3h-1zM697 255h1v42h-1zM701 239h1v18h-1zM705 237h1v2h-1zM717 236h1v7h-1zM721 232h1v5h-1zM749 234h1v2h-1zM753 226h1v5h-1zM757 210h1v16h-1zM761 210h1v1h-1zM773 218h1v5h-1zM777 216h1v3h-1zM793 220h1v18h-1zM797 204h1v19h-1zM805 206h1v1h-1zM809 202h1v5h-1zM817 188h1v9h-1zM833 188h1v5h-1zM837 179h1v11h-1zM845 179h1v1h-1zM849 171h1v9h-1zM861 186h1v5h-1zM865 179h1v8h-1zM881 208h1v5h-1zM889 208h1v15h-1zM893 202h1v7h-1zM909 218h1v1h-1zM913 210h1v5h-1zM917 208h1v5h-1zM929 204h1v13h-1zM941 216h1v3h-1zM949 200h1v15h-1zM953 200h1v1h-1zM957 192h1v5h-1zM965 200h1v1h-1zM969 186h1v11h-1zM977 190h1v1h-1zM989 202h1v2h-1zM993 186h1v18h-1zM1001 186h1v7h-1zM1013 192h1v9h-1zM1033 210h1v9h-1zM1037 202h1v9h-1zM1045 202h1v15h-1zM1049 192h1v13h-1zM1057 192h1v1h-1zM1061 188h1v1h-1zM1077 210h1v3h-1zM1081 177h1v36h-1zM1093 192h1v5h-1zM1117 190h1v15h-1zM1125 181h1v6h-1zM1133 183h1v8h-1zM1141 200h1v8h-1zM1149 192h1v5h-1zM1153 179h1v16h-1zM1157 175h1v6h-1zM1173 188h1v1h-1zM1177 183h1v1h-1zM1181 161h1v23h-1zM1185 153h1v11h-1zM1197 147h1v7h-1zM1205 141h1v7h-1zM1209 134h1v4h-1zM1221 116h1v13h-1zM1233 128h1v3h-1zM1237 124h1v1h-1zM1241 120h1v8h-1z" fill="#000"/>
<path d="M17 445h1v1h-1zM21 449h1v5h-1zM37 426h1v11h-1zM45 426h1v7h-1zM53 422h1v11h-1zM61 432h1v11h-1zM65 442h1v2h-1zM101 328h1v11h-1zM113 328h1v11h-1zM125 330h1v5h-1zM137 322h1v1h-1zM145 322h1v3h-1zM149 328h1v3h-1zM161 317h1v4h-1zM177 310h1v1h-1zM185 314h1v19h-1zM197 332h1v1h-1zM201 336h1v4h-1zM205 340h1v14h-1zM213 357h1v7h-1zM217 363h1v1h-1zM233 320h1v6h-1zM237 332h1v10h-1zM245 341h1v9h-1zM249 349h1v5h-1zM261 310h1v29h-1zM281 304h1v15h-1zM289 308h1v1h-1zM293 308h1v7h-1zM301 318h1v3h-1zM313 312h1v9h-1zM325 306h1v5h-1zM337 306h1v9h-1zM349 308h1v3h-1zM353 314h1v1h-1zM357 318h1v5h-1zM361 328h1v1h-1zM365 328h1v3h-1zM373 324h1v5h-1zM381 326h1v1h-1zM385 326h1v3h-1zM401 318h1v8h-1zM409 327h1v1h-1zM413 328h1v2h-1zM437 326h1v1h-1zM445 316h1v5h-1zM453 308h1v5h-1zM457 318h1v32h-1zM465 347h1v23h-1zM473 367h1v5h-1zM477 367h1v3h-1zM485 365h1v15h-1zM489 383h1v8h-1zM497 377h1v11h-1zM505 381h1v2h-1zM513 377h1v5h-1zM517 386h1v4h-1zM529 373h1v3h-1zM537 377h1v1h-1zM565 353h1v1h-1zM573 349h1v6h-1zM581 359h1v8h-1zM589 351h1v4h-1zM593 359h1v4h-1zM597 369h1v5h-1zM605 357h1v10h-1zM609 367h1v1h-1zM621 367h1v3h-1zM625 373h1v3h-1zM633 375h1v3h-1zM657 361h1v5h-1zM669 361h1v11h-1zM709 236h1v7h-1zM729 236h1v1h-1zM737 232h1v1h-1zM741 233h1v1h-1zM745 232h1v3h-1zM765 212h1v10h-1zM781 215h1v1h-1zM785 214h1v12h-1zM789 226h1v9h-1zM801 202h1v6h-1zM821 185h1v2h-1zM825 190h1v1h-1zM829 188h1v1h-1zM857 179h1v10h-1zM869 181h1v4h-1zM873 188h1v5h-1zM877 196h1v19h-1zM885 210h1v15h-1zM897 204h1v7h-1zM901 210h1v1h-1zM905 214h1v7h-1zM925 208h1v7h-1zM933 200h1v9h-1zM937 212h1v5h-1zM945 212h1v1h-1zM961 194h1v5h-1zM973 188h1v5h-1zM981 188h1v2h-1zM985 196h1v7h-1zM997 188h1v1h-1zM1005 188h1v5h-1zM1009 196h1v3h-1zM1017 190h1v1h-1zM1021 200h1v8h-1zM1025 208h1v1h-1zM1029 206h1v9h-1zM1041 198h1v17h-1zM1053 194h1v5h-1zM1065 192h1v15h-1zM1073 214h1v1h-1zM1085 175h1v15h-1zM1089 190h1v5h-1zM1097 188h1v2h-1zM1101 194h1v3h-1zM1105 202h1v1h-1zM1113 202h1v5h-1zM1129 185h1v2h-1zM1137 185h1v25h-1zM1145 198h1v1h-1zM1161 177h1v7h-1zM1165 183h1v6h-1zM1169 188h1v3h-1zM1189 149h1v1h-1zM1193 149h1v1h-1zM1201 149h1v1h-1zM1217 134h1v1h-1zM1225 118h1v5h-1zM1229 120h1v6h-1z" fill="#fff"/>
<rect x="9" y="315" width="1233" height="1" fill="#ff0000"/>
<rect x="9" y="384" width="1233" height="1" fill="#ff0000"/>
<rect x="457" y="81" width="1" height="829" fill="#ff0000"/>
<rect x="525" y="81" width="1" height="829" fill="#ff0000"/>
<rect x="9" y="382" width="5" height="5" fill="#ff0000"/>
<rect x="10" y="383" width="3" height="3" fill="#fff"/>
<rect x="1237" y="382" width="5" height="5" fill="#ff0000"/>
<rect x="1238" y="383" width="3" height="3" fill="#fff"/>
<path d="M689.5 272.5L684.5 277.5H687.5V282.5H692.5V277.5H695.5Z" fill="none" stroke="#ff0000" stroke-width="1" shape-rendering="auto"/>
<path d="M988 81H999L993.5 86.5Z" fill="#778899" shape-rendering="auto"/>
<polyline points="9.5,683.5 13.5,683.5 17.5,683.5 21.5,686.5 25.5,678.5 29.5,675.5 33.5,662.5 37.5,665.5 41.5,664.5 45.5,669.5 49.5,663.5 53.5,666.5 57.5,673.5 61.5,679.5 65.5,676.5 69.5,673.5 73.5,664.5 77.5,669.5 81.5,664.5 85.5,654.5 89.5,646.5 93.5,644.5 97.5,644.5 101.5,648.5 105.5,648.5 109.5,644.5 113.5,646.5 117.5,646.5 121.5,648.5 125.5,648.5 129.5,646.5 133.5,644.5 137.5,642.5 141.5,640.5 145.5,643.5 149.5,644.5 153.5,639.5 157.5,640.5 161.5,638.5 165.5,639.5 169.5,638.5 173.5,636.5 177.5,636.5 181.5,639.5 185.5,645.5 189.5,645.5 193.5,648.5 197.5,648.5 201.5,649.5 205.5,654.5 209.5,657.5 213.5,655.5 217.5,656.5 221.5,648.5 225.5,650.5 229.5,641.5 233.5,642.5 237.5,644.5 241.5,647.5 245.5,653.5 249.5,647.5 253.5,639.5 257.5,627.5 261.5,634.5 265.5,603.5 269.5,600.5 273.5,597.5 277.5,585.5 281.5,597.5 285.5,601.5 289.5,604.5 293.5,604.5 297.5,601.5 301.5,601.5 305.5,600.5 309.5,602.5 313.5,603.5 317.5,606.5 321.5,603.5 325.5,604.5 329.5,606.5 333.5,601.5 337.5,606.5 341.5,604.5 345.5,604.5 349.5,606.5 353.5,607.5 357.5,611.5 361.5,611.5 365.5,611.5 369.5,612.5 373.5,613.5 377.5,612.5 381.5,615.5 385.5,615.5 389.5,613.5 393.5,615.5 397.5,610.5 401.5,617.5 405.5,615.5 409.5,616.5 413.5,615.5 417.5,612.5 421.5,612.5 425.5,611.5 429.5,611.5 433.5,612.5 437.5,613.5 441.5,612.5 445.5,614.5 449.5,611.5 453.5,642.5 457.5,656.5 461.5,658.5 465.5,658.5 469.5,660.5 473.5,659.5 477.5,664.5 481.5,664.5 485.5,668.5 489.5,673.5 493.5,672.5 497.5,672.5 501.5,670.5 505.5,669.5 509.5,669.5 513.5,671.5 517.5,674.5 521.5,672.5 525.5,670.5 529.5,670.5 533.5,670.5 537.5,670.5 541.5,667.5 545.5,666.5 549.5,660.5 553.5,658.5 557.5,654.5 561.5,656.5 565.5,653.5 569.5,655.5 573.5,657.5 577.5,662.5 581.5,659.5 585.5,661.5 589.5,667.5 593.5,677.5 597.5,679.5 601.5,673.5 605.5,677.5 609.5,675.5 613.5,678.5 617.5,683.5 621.5,693.5 625.5,693.5 629.5,689.5 633.5,688.5 637.5,687.5 641.5,686.5 645.5,682.5 649.5,680.5 653.5,683.5 657.5,682.5 661.5,680.5 665.5,685.5 669.5,686.5 673.5,685.5 677.5,682.5 681.5,676.5 685.5,650.5 689.5,647.5 693.5,628.5 697.5,617.5 701.5,602.5 705.5,606.5 709.5,614.5 713.5,612.5 717.5,607.5 721.5,608.5 725.5,610.5 729.5,610.5 733.5,612.5 737.5,610.5 741.5,614.5 745.5,614.5 749.5,610.5 753.5,601.5 757.5,589.5 761.5,591.5 765.5,592.5 769.5,589.5 773.5,585.5 777.5,581.5 781.5,578.5 785.5,576.5 789.5,576.5 793.5,569.5 797.5,566.5 801.5,564.5 805.5,569.5 809.5,567.5 813.5,566.5 817.5,570.5 821.5,571.5 825.5,573.5 829.5,574.5 833.5,571.5 837.5,566.5 841.5,562.5 845.5,558.5 849.5,558.5 853.5,568.5 857.5,573.5 861.5,571.5 865.5,567.5 869.5,572.5 873.5,581.5 877.5,580.5 881.5,580.5 885.5,573.5 889.5,568.5 893.5,568.5 897.5,575.5 901.5,580.5 905.5,585.5 909.5,581.5 913.5,580.5 917.5,576.5 921.5,572.5 925.5,565.5 929.5,566.5 933.5,577.5 937.5,578.5 941.5,576.5 945.5,576.5 949.5,567.5 953.5,570.5 957.5,574.5 961.5,573.5 965.5,573.5 969.5,570.5 973.5,569.5 977.5,573.5 981.5,572.5 985.5,570.5 989.5,563.5 993.5,563.5 997.5,568.5 1001.5,570.5 1005.5,574.5 1009.5,570.5 1013.5,567.5 1017.5,577.5 1021.5,574.5 1025.5,575.5 1029.5,572.5 1033.5,568.5 1037.5,568.5 1041.5,569.5 1045.5,561.5 1049.5,557.5 1053.5,559.5 1057.5,559.5 1061.5,563.5 1065.5,570.5 1069.5,577.5 1073.5,576.5 1077.5,567.5 1081.5,563.5 1085.5,564.5 1089.5,567.5 1093.5,565.5 1097.5,568.5 1101.5,569.5 1105.5,567.5 1109.5,566.5 1113.5,560.5 1117.5,556.5 1121.5,550.5 1125.5,552.5 1129.5,555.5 1133.5,568.5 1137.5,572.5 1141.5,562.5 1145.5,563.5 1149.5,555.5 1153.5,549.5 1157.5,547.5 1161.5,547.5 1165.5,549.5 1169.5,544.5 1173.5,531.5 1177.5,526.5 1181.5,516.5 1185.5,518.5 1189.5,522.5 1193.5,527.5 1197.5,527.5 1201.5,526.5 1205.5,519.5 1209.5,512.5 1213.5,515.5 1217.5,513.5 1221.5,510.5 1225.5,516.5 1229.5,514.5 1233.5,508.5 1237.5,509.5 1241.5,508.5" fill="none" stroke="#4169e1" stroke-width="1"/>
<polyline points="9.5,675.5 13.5,675.5 17.5,675.5 21.5,674.5 25.5,674.5 29.5,674.5 33.5,674.5 37.5,673.5 41.5,673.5 45.5,673.5 49.5,673.5 53.5,672.5 57.5,672.5 61.5,672.5 65.5,672.5 69.5,672.5 73.5,671.5 77.5,671.5 81.5,671.5 85.5,671.5 89.5,670.5 93.5,670.5 97.5,670.5 101.5,670.5 105.5,670.5 109.5,670.5 113.5,670.5 117.5,670.5 121.5,670.5 125.5,670.5 129.5,669.5 133.5,669.5 137.5,669.5 141.5,669.5 145.5,669.5 149.5,669.5 153.5,669.5 157.5,669.5 161.5,668.5 165.5,668.5 169.5,668.5 173.5,668.5 177.5,668.5 181.5,668.5 185.5,667.5 189.5,667.5 193.5,667.5 197.5,667.5 201.5,667.5 205.5,667.5 209.5,667.5 213.5,667.5 217.5,667.5 221.5,667.5 225.5,666.5 229.5,666.5 233.5,666.5 237.5,666.5 241.5,666.5 245.5,666.5 249.5,666.5 253.5,666.5 257.5,666.5 261.5,665.5 265.5,665.5 269.5,665.5 273.5,665.5 277.5,665.5 281.5,664.5 285.5,664.5 289.5,664.5 293.5,664.5 297.5,664.5 301.5,663.5 305.5,663.5 309.5,663.5 313.5,663.5 317.5,663.5 321.5,662.5 325.5,662.5 329.5,662.5 333.5,662.5 337.5,662.5 341.5,661.5 345.5,661.5 349.5,661.5 353.5,661.5 357.5,661.5 361.5,661.5 365.5,660.5 369.5,660.5 373.5,660.5 377.5,660.5 381.5,660.5 385.5,660.5 389.5,660.5 393.5,659.5 397.5,659.5 401.5,659.5 405.5,659.5 409.5,659.5 413.5,659.5 417.5,658.5 421.5,658.5 425.5,658.5 429.5,658.5 433.5,657.5 437.5,657.5 441.5,657.5 445.5,657.5 449.5,656.5 453.5,656.5 457.5,656.5 461.5,656.5 465.5,656.5 469.5,656.5 473.5,656.5 477.5,656.5 481.5,656.5 485.5,656.5 489.5,656.5 493.5,656.5 497.5,656.5 501.5,656.5 505.5,656.5 509.5,656.5 513.5,656.5 517.5,656.5 521.5,656.5 525.5,655.5 529.5,655.5 533.5,655.5 537.5,655.5 541.5,655.5 545.5,655.5 549.5,655.5 553.5,655.5 557.5,655.5 561.5,654.5 565.5,654.5 569.5,654.5 573.5,654.5 577.5,654.5 581.5,654.5 585.5,654.5 589.5,654.5 593.5,654.5 597.5,653.5 601.5,653.5 605.5,653.5 609.5,653.5 613.5,653.5 617.5,653.5 621.5,653.5 625.5,653.5 629.5,653.5 633.5,653.5 637.5,653.5 641.5,653.5 645.5,653.5 649.5,653.5 653.5,653.5 657.5,653.5 661.5,653.5 665.5,653.5 669.5,653.5 673.5,653.5 677.5,653.5 681.5,653.5 685.5,653.5 689.5,653.5 693.5,653.5 697.5,652.5 701.5,652.5 705.5,652.5 709.5,652.5 713.5,651.5 717.5,651.5 721.5,651.5 725.5,650.5 729.5,650.5 733.5,650.5 737.5,650.5 741.5,649.5 745.5,649.5 749.5,649.5 753.5,648.5 757.5,648.5 761.5,648.5 765.5,647.5 769.5,647.5 773.5,647.5 777.5,646.5 781.5,646.5 785.5,646.5 789.5,645.5 793.5,645.5 797.5,645.5 801.5,644.5 805.5,644.5 809.5,643.5 813.5,643.5 817.5,643.5 821.5,642.5 825.5,642.5 829.5,641.5 833.5,641.5 837.5,641.5 841.5,640.5 845.5,640.5 849.5,639.5 853.5,639.5 857.5,638.5 861.5,638.5 865.5,637.5 869.5,637.5 873.5,637.5 877.5,637.5 881.5,637.5 885.5,636.5 889.5,636.5 893.5,636.5 897.5,636.5 901.5,635.5 905.5,635.5 909.5,635.5 913.5,635.5 917.5,634.5 921.5,634.5 925.5,634.5 929.5,634.5 933.5,633.5 937.5,633.5 941.5,633.5 945.5,632.5 949.5,632.5 953.5,632.5 957.5,632.5 961.5,632.5 965.5,631.5 969.5,631.5 973.5,631.5 977.5,631.5 981.5,631.5 985.5,630.5 989.5,630.5 993.5,630.5 997.5,630.5 1001.5,629.5 1005.5,629.5 1009.5,629.5 1013.5,629.5 1017.5,629.5 1021.5,629.5 1025.5,629.5 1029.5,628.5 1033.5,628.5 1037.5,628.5 1041.5,628.5 1045.5,628.5 1049.5,628.5 1053.5,628.5 1057.5,628.5 1061.5,627.5 1065.5,627.5 1069.5,627.5 1073.5,627.5 1077.5,627.5 1081.5,627.5 1085.5,627.5 1089.5,627.5 1093.5,626.5 1097.5,626.5 1101.5,626.5 1105.5,625.5 1109.5,625.5 1113.5,625.5 1117.5,625.5 1121.5,624.5 1125.5,624.5 1129.5,624.5 1133.5,624.5 1137.5,623.5 1141.5,623.5 1145.5,623.5 1149.5,622.5 1153.5,622.5 1157.5,622.5 1161.5,622.5 1165.5,621.5 1169.5,621.5 1173.5,621.5 1177.5,621.5 1181.5,620.5 1185.5,620.5 1189.5,620.5 1193.5,620.5 1197.5,619.5 1201.5,619.5 1205.5,619.5 1209.5,619.5 1213.5,618.5 1217.5,618.5 1221.5,618.5 1225.5,618.5 1229.5,617.5 1233.5,617.5 1237.5,617.5 1241.5,617.5" fill="none" stroke="#daa520" stroke-width="1"/>
<path d="M9 891h1v19h-1zM13 891h1v19h-1zM17 891h1v19h-1zM21 894h1v16h-1zM25 886h1v24h-1zM29 883h1v27h-1zM33 870h1v40h-1zM37 873h1v37h-1zM41 872h1v38h-1zM45 877h1v33h-1zM49 871h1v39h-1zM53 874h1v36h-1zM57 881h1v29h-1zM61 887h1v23h-1zM65 884h1v26h-1zM69 881h1v29h-1zM73 872h1v38h-1zM77 877h1v33h-1zM81 872h1v38h-1zM85 862h1v48h-1zM89 854h1v56h-1zM93 852h1v58h-1zM97 852h1v58h-1zM101 856h1v54h-1zM105 856h1v54h-1zM109 852h1v58h-1zM113 854h1v56h-1zM117 854h1v56h-1zM121 856h1v54h-1zM125 856h1v54h-1zM129 854h1v56h-1zM133 852h1v58h-1zM137 850h1v60h-1zM141 848h1v62h-1zM145 851h1v59h-1zM149 852h1v58h-1zM153 847h1v63h-1zM157 848h1v62h-1zM161 846h1v64h-1zM165 847h1v63h-1zM169 846h1v64h-1zM173 844h1v66h-1zM177 844h1v66h-1zM181 847h1v63h-1zM185 853h1v57h-1zM189 853h1v57h-1zM193 856h1v54h-1zM197 856h1v54h-1zM201 857h1v53h-1zM205 862h1v48h-1zM209 865h1v45h-1zM213 863h1v47h-1zM217 864h1v46h-1zM221 856h1v54h-1zM225 858h1v52h-1zM229 849h1v61h-1zM233 850h1v60h-1zM237 852h1v58h-1zM241 855h1v55h-1zM245 861h1v49h-1zM249 855h1v55h-1zM253 847h1v63h-1zM257 835h1v75h-1zM261 842h1v68h-1zM265 811h1v99h-1zM269 808h1v102h-1zM273 805h1v105h-1zM277 793h1v117h-1zM281 805h1v105h-1zM285 809h1v101h-1zM289 812h1v98h-1zM293 812h1v98h-1zM297 809h1v101h-1zM301 809h1v101h-1zM305 808h1v102h-1zM309 810h1v100h-1zM313 811h1v99h-1zM317 814h1v96h-1zM321 811h1v99h-1zM325 812h1v98h-1zM329 814h1v96h-1zM333 809h1v101h-1zM337 814h1v96h-1zM341 812h1v98h-1zM345 812h1v98h-1zM349 814h1v96h-1zM353 815h1v95h-1zM357 819h1v91h-1zM361 819h1v91h-1zM365 819h1v91h-1zM369 820h1v90h-1zM373 821h1v89h-1zM377 820h1v90h-1zM381 823h1v87h-1zM385 823h1v87h-1zM389 821h1v89h-1zM393 823h1v87h-1zM397 818h1v92h-1zM401 825h1v85h-1zM405 823h1v87h-1zM409 824h1v86h-1zM413 823h1v87h-1zM417 820h1v90h-1zM421 820h1v90h-1zM425 819h1v91h-1zM429 819h1v91h-1zM433 820h1v90h-1zM437 821h1v89h-1zM441 820h1v90h-1zM445 822h1v88h-1zM449 819h1v91h-1zM453 850h1v60h-1zM457 864h1v46h-1zM461 866h1v44h-1zM465 866h1v44h-1zM469 868h1v42h-1zM473 867h1v43h-1zM477 872h1v38h-1zM481 872h1v38h-1zM485 876h1v34h-1zM489 881h1v29h-1zM493 880h1v30h-1zM497 880h1v30h-1zM501 878h1v32h-1zM505 877h1v33h-1zM509 877h1v33h-1zM513 879h1v31h-1zM517 882h1v28h-1zM521 880h1v30h-1zM525 878h1v32h-1zM529 878h1v32h-1zM533 878h1v32h-1zM537 878h1v32h-1zM541 875h1v35h-1zM545 874h1v36h-1zM549 868h1v42h-1zM553 866h1v44h-1zM557 862h1v48h-1zM561 864h1v46h-1zM565 861h1v49h-1zM569 863h1v47h-1zM573 865h1v45h-1zM577 870h1v40h-1zM581 867h1v43h-1zM585 869h1v41h-1zM589 875h1v35h-1zM593 885h1v25h-1zM597 887h1v23h-1zM601 881h1v29h-1zM605 885h1v25h-1zM609 883h1v27h-1zM613 886h1v24h-1zM617 891h1v19h-1zM621 901h1v9h-1zM625 901h1v9h-1zM629 897h1v13h-1zM633 896h1v14h-1zM637 895h1v15h-1zM641 894h1v16h-1zM645 890h1v20h-1zM649 888h1v22h-1zM653 891h1v19h-1zM657 890h1v20h-1zM661 888h1v22h-1zM665 893h1v17h-1zM669 894h1v16h-1zM673 893h1v17h-1zM677 890h1v20h-1zM681 884h1v26h-1zM685 858h1v52h-1zM689 855h1v55h-1zM693 836h1v74h-1zM697 825h1v85h-1zM701 810h1v100h-1zM705 814h1v96h-1zM709 822h1v88h-1zM713 820h1v90h-1zM717 815h1v95h-1zM721 816h1v94h-1zM725 818h1v92h-1zM729 818h1v92h-1zM733 820h1v90h-1zM737 818h1v92h-1zM741 822h1v88h-1zM745 822h1v88h-1zM749 818h1v92h-1zM753 809h1v101h-1zM757 797h1v113h-1zM761 799h1v111h-1zM765 800h1v110h-1zM769 797h1v113h-1zM773 793h1v117h-1zM777 789h1v121h-1zM781 786h1v124h-1zM785 784h1v126h-1zM789 784h1v126h-1zM793 777h1v133h-1zM797 774h1v136h-1zM801 772h1v138h-1zM805 777h1v133h-1zM809 775h1v135h-1zM813 774h1v136h-1zM817 778h1v132h-1zM821 779h1v131h-1zM825 781h1v129h-1zM829 782h1v128h-1zM833 779h1v131h-1zM837 774h1v136h-1zM841 770h1v140h-1zM845 766h1v144h-1zM849 766h1v144h-1zM853 776h1v134h-1zM857 781h1v129h-1zM861 779h1v131h-1zM865 775h1v135h-1zM869 780h1v130h-1zM873 789h1v121h-1zM877 788h1v122h-1zM881 788h1v122h-1zM885 781h1v129h-1zM889 776h1v134h-1zM893 776h1v134h-1zM897 783h1v127h-1zM901 788h1v122h-1zM905 793h1v117h-1zM909 789h1v121h-1zM913 788h1v122h-1zM917 784h1v126h-1zM921 780h1v130h-1zM925 773h1v137h-1zM929 774h1v136h-1zM933 785h1v125h-1zM937 786h1v124h-1zM941 784h1v126h-1zM945 784h1v126h-1zM949 775h1v135h-1zM953 778h1v132h-1zM957 782h1v128h-1zM961 781h1v129h-1zM965 781h1v129h-1zM969 778h1v132h-1zM973 777h1v133h-1zM977 781h1v129h-1zM981 780h1v130h-1zM985 778h1v132h-1zM989 771h1v139h-1zM993 771h1v139h-1zM997 776h1v134h-1zM1001 778h1v132h-1zM1005 782h1v128h-1zM1009 778h1v132h-1zM1013 775h1v135h-1zM1017 785h1v125h-1zM1021 782h1v128h-1zM1025 783h1v127h-1zM1029 780h1v130h-1zM1033 776h1v134h-1zM1037 776h1v134h-1zM1041 777h1v133h-1zM1045 769h1v141h-1zM1049 765h1v145h-1zM1053 767h1v143h-1zM1057 767h1v143h-1zM1061 771h1v139h-1zM1065 778h1v132h-1zM1069 785h1v125h-1zM1073 784h1v126h-1zM1077 775h1v135h-1zM1081 771h1v139h-1zM1085 772h1v138h-1zM1089 775h1v135h-1zM1093 773h1v137h-1zM1097 776h1v134h-1zM1101 777h1v133h-1zM1105 775h1v135h-1zM1109 774h1v136h-1zM1113 768h1v142h-1zM1117 764h1v146h-1zM1121 758h1v152h-1zM1125 760h1v150h-1zM1129 763h1v147h-1zM1133 776h1v134h-1zM1137 780h1v130h-1zM1141 770h1v140h-1zM1145 771h1v139h-1zM1149 763h1v147h-1zM1153 757h1v153h-1zM1157 755h1v155h-1zM1161 755h1v155h-1zM1165 757h1v153h-1zM1169 752h1v158h-1zM1173 739h1v171h-1zM1177 734h1v176h-1zM1181 724h1v186h-1zM1185 726h1v184h-1zM1189 730h1v180h-1zM1193 735h1v175h-1zM1197 735h1v175h-1zM1201 734h1v176h-1zM1205 727h1v183h-1zM1209 720h1v190h-1zM1213 723h1v187h-1zM1217 721h1v189h-1zM1221 718h1v192h-1zM1225 724h1v186h-1zM1229 722h1v188h-1zM1233 716h1v194h-1zM1237 717h1v193h-1zM1241 716h1v194h-1z" fill="#4169e1"/>
<polyline points="9.5,883.5 13.5,883.5 17.5,883.5 21.5,882.5 25.5,882.5 29.5,882.5 33.5,882.5 37.5,881.5 41.5,881.5 45.5,881.5 49.5,881.5 53.5,880.5 57.5,880.5 61.5,880.5 65.5,880.5 69.5,880.5 73.5,879.5 77.5,879.5 81.5,879.5 85.5,879.5 89.5,878.5 93.5,878.5 97.5,878.5 101.5,878.5 105.5,878.5 109.5,878.5 113.5,878.5 117.5,878.5 121.5,878.5 125.5,878.5 129.5,877.5 133.5,877.5 137.5,877.5 141.5,877.5 145.5,877.5 149.5,877.5 153.5,877.5 157.5,877.5 161.5,876.5 165.5,876.5 169.5,876.5 173.5,876.5 177.5,876.5 181.5,876.5 185.5,875.5 189.5,875.5 193.5,875.5 197.5,875.5 201.5,875.5 205.5,875.5 209.5,875.5 213.5,875.5 217.5,875.5 221.5,875.5 225.5,874.5 229.5,874.5 233.5,874.5 237.5,874.5 241.5,874.5 245.5,874.5 249.5,874.5 253.5,874.5 257.5,874.5 261.5,873.5 265.5,873.5 269.5,873.5 273.5,873.5 277.5,873.5 281.5,872.5 285.5,872.5 289.5,872.5 293.5,872.5 297.5,872.5 301.5,871.5 305.5,871.5 309.5,871.5 313.5,871.5 317.5,871.5 321.5,870.5 325.5,870.5 329.5,870.5 333.5,870.5 337.5,870.5 341.5,869.5 345.5,869.5 349.5,869.5 353.5,869.5 357.5,869.5 361.5,869.5 365.5,868.5 369.5,868.5 373.5,868.5 377.5,868.5 381.5,868.5 385.5,868.5 389.5,868.5 393.5,867.5 397.5,867.5 401.5,867.5 405.5,867.5 409.5,867.5 413.5,867.5 417.5,866.5 421.5,866.5 425.5,866.5 429.5,866.5 433.5,865.5 437.5,865.5 441.5,865.5 445.5,865.5 449.5,864.5 453.5,864.5 457.5,864.5 461.5,864.5 465.5,864.5 469.5,864.5 473.5,864.5 477.5,864.5 481.5,864.5 485.5,864.5 489.5,864.5 493.5,864.5 497.5,864.5 501.5,864.5 505.5,864.5 509.5,864.5 513.5,864.5 517.5,864.5 521.5,864.5 525.5,863.5 529.5,863.5 533.5,863.5 537.5,863.5 541.5,863.5 545.5,863.5 549.5,863.5 553.5,863.5 557.5,863.5 561.5,862.5 565.5,862.5 569.5,862.5 573.5,862.5 577.5,862.5 581.5,862.5 585.5,862.5 589.5,862.5 593.5,862.5 597.5,861.5 601.5,861.5 605.5,861.5 609.5,861.5 613.5,861.5 617.5,861.5 621.5,861.5 625.5,861.5 629.5,861.5 633.5,861.5 637.5,861.5 641.5,861.5 645.5,861.5 649.5,861.5 653.5,861.5 657.5,861.5 661.5,861.5 665.5,861.5 669.5,861.5 673.5,861.5 677.5,861.5 681.5,861.5 685.5,861.5 689.5,861.5 693.5,861.5 697.5,860.5 701.5,860.5 705.5,860.5 709.5,860.5 713.5,859.5 717.5,859.5 721.5,859.5 725.5,858.5 729.5,858.5 733.5,858.5 737.5,858.5 741.5,857.5 745.5,857.5 749.5,857.5 753.5,856.5 757.5,856.5 761.5,856.5 765.5,855.5 769.5,855.5 773.5,855.5 777.5,854.5 781.5,854.5 785.5,854.5 789.5,853.5 793.5,853.5 797.5,853.5 801.5,852.5 805.5,852.5 809.5,851.5 813.5,851.5 817.5,851.5 821.5,850.5 825.5,850.5 829.5,849.5 833.5,849.5 837.5,849.5 841.5,848.5 845.5,848.5 849.5,847.5 853.5,847.5 857.5,846.5 861.5,846.5 865.5,845.5 869.5,845.5 873.5,845.5 877.5,845.5 881.5,845.5 885.5,844.5 889.5,844.5 893.5,844.5 897.5,844.5 901.5,843.5 905.5,843.5 909.5,843.5 913.5,843.5 917.5,842.5 921.5,842.5 925.5,842.5 929.5,842.5 933.5,841.5 937.5,841.5 941.5,841.5 945.5,840.5 949.5,840.5 953.5,840.5 957.5,840.5 961.5,840.5 965.5,839.5 969.5,839.5 973.5,839.5 977.5,839.5 981.5,839.5 985.5,838.5 989.5,838.5 993.5,838.5 997.5,838.5 1001.5,837.5 1005.5,837.5 1009.5,837.5 1013.5,837.5 1017.5,837.5 1021.5,837.5 1025.5,837.5 1029.5,836.5 1033.5,836.5 1037.5,836.5 1041.5,836.5 1045.5,836.5 1049.5,836.5 1053.5,836.5 1057.5,836.5 1061.5,835.5 1065.5,835.5 1069.5,835.5 1073.5,835.5 1077.5,835.5 1081.5,835.5 1085.5,835.5 1089.5,835.5 1093.5,834.5 1097.5,834.5 1101.5,834.5 1105.5,833.5 1109.5,833.5 1113.5,833.5 1117.5,833.5 1121.5,832.5 1125.5,832.5 1129.5,832.5 1133.5,832.5 1137.5,831.5 1141.5,831.5 1145.5,831.5 1149.5,830.5 1153.5,830.5 1157.5,830.5 1161.5,830.5 1165.5,829.5 1169.5,829.5 1173.5,829.5 1177.5,829.5 1181.5,828.5 1185.5,828.5 1189.5,828.5 1193.5,828.5 1197.5,827.5 1201.5,827.5 1205.5,827.5 1209.5,827.5 1213.5,826.5 1217.5,826.5 1221.5,826.5 1225.5,826.5 1229.5,825.5 1233.5,825.5 1237.5,825.5 1241.5,825.5" fill="none" stroke="#daa520" stroke-width="1"/>
<path d="M9 905V910H14Z" fill="#778899"/>
<rect x="457" y="706" width="1" height="204" fill="#ff0000"/>
<rect x="525" y="706" width="1" height="204" fill="#ff0000"/>
<rect x="8.5" y="80.5" width="1234" height="414" fill="none" stroke="#fff" stroke-width="1"/>
<rect x="8.5" y="497.5" width="1234" height="205" fill="none" stroke="#fff" stroke-width="1"/>
<rect x="8.5" y="705.5" width="1234" height="205" fill="none" stroke="#fff" stroke-width="1"/>
<path d="M1243 91h2v1h-2zM1243 131h2v1h-2zM1243 170h2v1h-2zM1243 209h2v1h-2zM1243 248h2v1h-2zM1243 288h2v1h-2zM1243 327h2v1h-2zM1243 366h2v1h-2zM1243 405h2v1h-2zM1243 444h2v1h-2zM1243 484h2v1h-2zM1243 498h1v1h-1zM1243 701h1v1h-1zM1243 706h1v1h-1zM1243 909h1v1h-1zM9 911h1v3h-1zM73 911h1v3h-1zM137 911h1v3h-1zM201 911h1v3h-1zM265 911h1v3h-1zM329 911h1v3h-1zM393 911h1v3h-1zM457 911h1v3h-1zM521 911h1v3h-1zM585 911h1v3h-1zM649 911h1v3h-1zM713 911h1v3h-1zM777 911h1v3h-1zM841 911h1v3h-1zM905 911h1v3h-1zM969 911h1v3h-1zM1033 911h1v3h-1zM1097 911h1v3h-1zM1161 911h1v3h-1zM1225 911h1v3h-1z" fill="#fff"/>
<rect x="1244" y="309" width="36" height="11" fill="#ff0000"/>
<rect x="1244" y="378" width="36" height="11" fill="#ff0000"/>
<rect x="417" y="914" width="80" height="11" fill="#ff0000"/>
<rect x="485" y="914" width="80" height="11" fill="#ff0000"/>
</g>
<g font-size="9.33" fill="#fff" stroke="#fff" stroke-width="0.12">
<text x="1248" y="94">0.8305</text>
<text x="1248" y="134">0.8285</text>
<text x="1248" y="173">0.8265</text>
<text x="1248" y="212">0.8245</text>
<text x="1248" y="251">0.8225</text>
<text x="1248" y="291">0.8205</text>
<text x="1248" y="330">0.8185</text>
<text x="1248" y="369">0.8165</text>
<text x="1248" y="408">0.8145</text>
<text x="1248" y="447">0.8125</text>
<text x="1248" y="487">0.8105</text>
<text x="1248" y="318" fill="#200" stroke="none">0.8191</text>
<text x="1248" y="387" fill="#200" stroke="none">0.8156</text>
<text x="1246" y="507">2.6479</text>
<text x="1246" y="699">1.4266</text>
<text x="1246" y="715">2.6479</text>
<text x="1246" y="907">1.4266</text>
<rect x="13" y="84" width="189" height="11" fill="#000" stroke="none"/>
<text x="14" y="92" textLength="61" lengthAdjust="spacingAndGlyphs">AUDUSD,M30</text>
<text x="81" y="92" textLength="27.6" lengthAdjust="spacingAndGlyphs">0.8352</text>
<text x="112" y="92" textLength="27.6" lengthAdjust="spacingAndGlyphs">0.8359</text>
<text x="143" y="92" textLength="27.6" lengthAdjust="spacingAndGlyphs">0.8347</text>
<text x="174" y="92" textLength="27.6" lengthAdjust="spacingAndGlyphs">0.8352</text>
<rect x="12" y="504" width="123" height="8" fill="#000" stroke="none"/>
<text x="13" y="510">Sentinal Index 3.5045 3.0715</text>
<rect x="12" y="712" width="123" height="8" fill="#000" stroke="none"/>
<text x="13" y="718">Sentinal Index 3.5045 3.0715</text>
<text x="8" y="923">4 Apr 2007</text>
<text x="72" y="923">4 Apr 15:00</text>
<text x="136" y="923">4 Apr 23:00</text>
<text x="200" y="923">5 Apr 07:00</text>
<text x="264" y="923">5 Apr 15:00</text>
<text x="328" y="923">5 Apr 23:00</text>
<text x="392" y="923">6 Apr</text>
<text x="584" y="923">9 Apr 14:30</text>
<text x="648" y="923">9 Apr 22:30</text>
<text x="712" y="923">10 Apr 06:30</text>
<text x="776" y="923">10 Apr 14:30</text>
<text x="840" y="923">10 Apr 22:30</text>
<text x="904" y="923">11 Apr 06:30</text>
<text x="968" y="923">11 Apr 14:30</text>
<text x="1032" y="923">11 Apr 22:30</text>
<text x="1096" y="923">12 Apr 06:30</text>
<text x="1160" y="923">12 Apr 14:30</text>
<text x="1224" y="923">12 Apr 22:30</text>
<text x="565.3" y="923">0</text>
<text x="421.5" y="923" fill="#300" stroke="none">2007.04.06 15:</text>
<rect x="485" y="914" width="5" height="11" fill="#ff0000" stroke="none"/>
<text x="490" y="923" fill="#300" stroke="none">2007.04.09 07:00</text>
</g>
<g font-size="11">
<rect x="220" y="931" width="88" height="18" fill="#fff" shape-rendering="crispEdges"/>
<path d="M220.5 931V948.5H307.5V931" fill="none" stroke="#000" stroke-width="1" shape-rendering="crispEdges"/>
<rect x="64" y="933" width="1" height="13" fill="#8a8a90" shape-rendering="crispEdges"/>
<rect x="132" y="933" width="1" height="13" fill="#8a8a90" shape-rendering="crispEdges"/>
<text x="19" y="943" font-size="11" fill="#8b8b9b" textLength="34" lengthAdjust="spacingAndGlyphs">OIL,H4</text>
<text x="76" y="943" font-size="11" fill="#8b8b9b" textLength="44" lengthAdjust="spacingAndGlyphs">GOLD,H4</text>
<text x="144" y="943" font-size="11" fill="#8b8b9b" textLength="63" lengthAdjust="spacingAndGlyphs">EURUSD,M30</text>
<text x="231" y="943" font-size="11" fill="#000" textLength="64" lengthAdjust="spacingAndGlyphs">AUDUSD,M30</text>
<path d="M1260.5 937.5v6l-3.500-3z M1272.500 937.500v6l3.500-3z" fill="#9a9a9e"/>
<rect x="1283" y="931" width="1" height="19" fill="#fdfdfd"/>
</g>
</svg>
</body></html>
